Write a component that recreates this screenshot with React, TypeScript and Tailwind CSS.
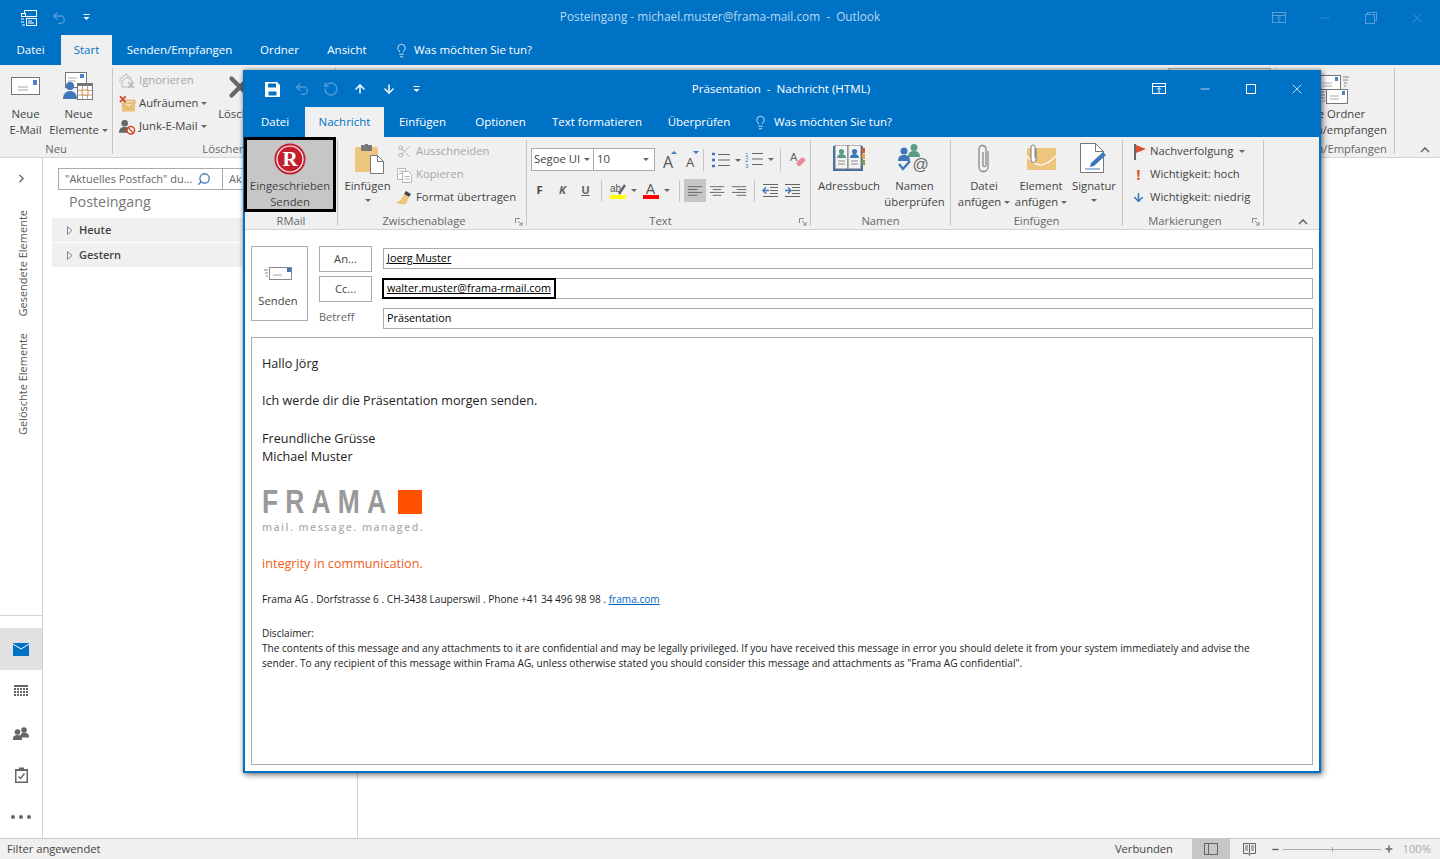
import type { ReactNode } from "react";
import { ArrowDown, ArrowUp, ChevronRight, Lightbulb, Minus, Plus, RotateCcw, Scissors, Search, Undo2, X } from "lucide-react";

const Caret = ({ className = "" }: { className?: string }) => (
  <span className={`inline-block w-0 h-0 border-x-[3px] border-x-transparent border-t-[3px] border-t-[#666] align-middle ${className}`} />
);

const QatMore = () => (
  <svg width="7" height="7" viewBox="0 0 7 7" fill="white"><rect x="0.5" y="0" width="6" height="1" /><path d="M0.5 3h6l-3 3z" /></svg>
);

const RestoreRibbon = ({ c = "white" }: { c?: string }) => (
  <svg width="14" height="12" viewBox="0 0 14 12" fill="none" stroke={c}><rect x="0.5" y="0.5" width="13" height="10" /><path d="M0.5 3.5h13M7 10V5M5 6.5l2-2 2 2" /></svg>
);

const Envelope = ({ w = 30, h = 20 }: { w?: number; h?: number }) => (
  <svg width={w} height={h} viewBox="0 0 30 20"><rect x="0.5" y="0.5" width="28" height="17" fill="white" stroke="#777" /><rect x="22" y="3" width="4" height="5" fill="#4a86c5" /><path d="M7 10h10M7 13h10" stroke="#aaa" /></svg>
);

const NewItems = () => (
  <svg width="31" height="30" viewBox="0 0 31 30"><rect x="2.5" y="0.5" width="21" height="15" fill="white" stroke="#777" /><rect x="17" y="2" width="4" height="4" fill="#4a86c5" /><path d="M5 6h9M5 9h7" stroke="#aaa" /><circle cx="7" cy="14" r="4" fill="#3f78b8" /><path d="M0 27c0-5 3-8 7-8s7 3 7 8z" fill="#3f78b8" /><rect x="14.5" y="11.5" width="15" height="16" fill="white" stroke="#777" /><rect x="14" y="11" width="16" height="3" fill="#777" /><path d="M19.5 14v13M24.5 14v13M15 18.5h14M15 23h14" stroke="#aaa" /><rect x="19" y="18" width="6" height="5" fill="white" stroke="#e58a2b" /></svg>
);

const IgnoreIcon = () => (
  <svg width="17" height="17" viewBox="0 0 17 17" fill="none" stroke="#b5b5b5"><path d="M1 7l6-5 6 5M1 7v3M3 9l5-4 5 4v6H3z" /><path d="M9 10l6 6M15 10l-6 6" strokeWidth="1.4" /></svg>
);

const CleanIcon = () => (
  <svg width="18" height="18" viewBox="0 0 18 18"><rect x="3" y="8" width="14" height="9" fill="#e9c27a" /><path d="M3 8l7 5 7-5M5 5h12v3H5z" fill="#f3dca9" stroke="#d9a95a" /><path d="M1 1l6 6M7 1L1 7" stroke="#d64a27" strokeWidth="2" /></svg>
);

const JunkIcon = () => (
  <svg width="18" height="18" viewBox="0 0 18 18"><circle cx="6" cy="5" r="3.5" fill="#666" /><path d="M0 15c0-4 2-6 6-6s6 2 6 6z" fill="#666" /><circle cx="12.5" cy="12.5" r="4" fill="white" stroke="#d64a27" strokeWidth="1.6" /><path d="M10 10l5 5" stroke="#d64a27" strokeWidth="1.6" /></svg>
);

const SendReceiveIcon = () => (
  <svg width="32" height="30" viewBox="0 0 32 30"><rect x="1.5" y="0.5" width="20" height="14" fill="white" stroke="#777" /><rect x="16" y="2" width="3" height="4" fill="#4a86c5" /><path d="M4 8h9M4 11h9" stroke="#aaa" /><path d="M24 2h6M24 5h5M25 8h3M25 11h2" stroke="#888" /><rect x="7.5" y="14.5" width="21" height="14" fill="white" stroke="#777" /><rect x="23" y="16" width="3" height="4" fill="#4a86c5" /><path d="M11 21h9M11 24h9" stroke="#aaa" /><path d="M0 17h6M1 20h5M2 23h4M3 26h3" stroke="#888" /></svg>
);

const RMailLogo = () => (
  <svg width="32" height="32" viewBox="0 0 32 32"><circle cx="16" cy="16" r="15.5" fill="#c2202e" /><circle cx="16" cy="16" r="13" fill="none" stroke="white" strokeWidth="1.2" /><text x="16" y="23" textAnchor="middle" fontFamily="Liberation Serif" fontWeight="700" fontSize="21" fill="white">R</text></svg>
);

const PasteIcon = () => (
  <svg className="ml-[4px]" width="29" height="30" viewBox="0 0 29 30"><rect x="0" y="3" width="23" height="25" rx="2" fill="#edc57d" /><rect x="6" y="1" width="11" height="6" rx="1" fill="#777" /><rect x="10" y="0" width="3" height="3" fill="#777" /><path d="M15.5 11.5h7l6 6v12h-13z" fill="white" stroke="#777" /><path d="M22.5 11.5v6h6" fill="none" stroke="#777" /></svg>
);

const CopyIcon = () => (
  <svg width="16" height="16" viewBox="0 0 16 16" fill="white" stroke="#b5b5b5"><path d="M0.5 1.5h8v11h-8z" /><path d="M5.5 4.5h6l3 3v8h-9z" /><path d="M2 4h4M2 6.5h3M7.5 9.5h5M7.5 12h5" /></svg>
);

const BrushIcon = () => (
  <svg width="17" height="15" viewBox="0 0 17 15"><path d="M10 1l5 3-2 3-5-3z" fill="#444" /><path d="M8 4l5 3-3 7c-3 1-8 0-10-2 3 0 6-3 8-8z" fill="#edc57d" /></svg>
);

const BigA = ({ up }: { up: boolean }) => (
  <span className="relative w-[22px] h-[22px] flex items-end justify-center">
    <span className={`${up ? "text-[16px]" : "text-[13px]"} leading-[18px] text-[#555]`}>A</span>
    <span className={`absolute right-[2px] top-[2px] w-0 h-0 border-x-[3px] border-x-transparent ${up ? "border-b-[3px] border-b-[#3f78b8]" : "border-t-[3px] border-t-[#3f78b8]"}`} />
  </span>
);

const Lines = ({ kind }: { kind: "left" | "center" | "right" | "out" | "in" }) => {
  const rows: Record<string, string> = {
    left: "M4 5.5h15M4 8.5h10M4 11.5h15M4 14.5h10",
    center: "M4 5.5h15M7 8.5h9M4 11.5h15M7 14.5h9",
    right: "M4 5.5h15M9 8.5h10M4 11.5h15M9 14.5h10",
    out: "M1 3.5h15M8 6.5h8M8 9.5h8M8 12.5h8M1 15.5h15",
    in: "M1 3.5h15M8 6.5h8M8 9.5h8M8 12.5h8M1 15.5h15",
  };
  return (
    <svg width={kind === "out" || kind === "in" ? 17 : 23} height="19" viewBox={kind === "out" || kind === "in" ? "0 0 17 19" : "0 0 23 19"} fill="none" stroke="#666">
      <path d={rows[kind]} />
      {kind === "out" && <path d="M7 9.5H1M4 6.5l-3 3 3 3" stroke="#3f78b8" strokeWidth="1.4" />}
      {kind === "in" && <path d="M1 9.5h6M4 6.5l3 3-3 3" stroke="#3f78b8" strokeWidth="1.4" />}
    </svg>
  );
};

const AddressBook = () => (
  <svg width="32" height="27" viewBox="0 0 32 27"><rect x="0" y="1" width="30" height="25" fill="#3f6fa8" /><rect x="2" y="0" width="13" height="24" fill="#f4f4f4" stroke="#777" /><rect x="15" y="0" width="13" height="24" fill="#f4f4f4" stroke="#777" /><rect x="29" y="3" width="3" height="5" fill="#d8562e" /><rect x="29" y="9" width="3" height="5" fill="#e9a23b" /><rect x="29" y="15" width="3" height="5" fill="#7a9f4d" /><circle cx="8.5" cy="6.5" r="2.6" fill="#5a9b87" /><path d="M4 13c0-3 2-4 4.500-4s4.500 1 4.500 4z" fill="#5a9b87" /><circle cx="21.500" cy="6.500" r="2.600" fill="#3f78b8" /><path d="M17 13c0-3 2-4 4.500-4s4.500 1 4.500 4z" fill="#3f78b8" /><path d="M5 16h7M5 19h7M18 16h7M18 19h7" stroke="#888" /></svg>
);

const CheckNames = () => (
  <svg width="33" height="29" viewBox="0 0 33 29"><circle cx="16" cy="3.500" r="3.500" fill="#5a9b87" /><path d="M10 13c0-4 2-6 6-6s6 2 6 6z" fill="#5a9b87" /><circle cx="6" cy="7" r="3.500" fill="#3f78b8" /><path d="M0 17c0-4 2-6 6-6s6 2 6 6z" fill="#3f78b8" /><path d="M1 20l4 5 7-8" fill="none" stroke="#3f78b8" strokeWidth="2.400" /><text x="22.500" y="26" textAnchor="middle" fontFamily="Liberation Sans" fontSize="16" fill="#666">@</text></svg>
);

const Clip = () => (
  <svg width="14" height="29" viewBox="0 0 14 29" fill="none" stroke="#8a8a8a" strokeWidth="1.300"><path d="M11 7v16a4.500 4.500 0 0 1-9 0V5a3.500 3.500 0 0 1 7 0v16a1.500 1.500 0 0 1-3 0V8" /></svg>
);

const ItemAttach = () => (
  <svg width="29" height="30" viewBox="0 0 29 30"><rect x="0" y="4" width="29" height="22" fill="#edc57d" /><path d="M0 12c6 7 9 9 14 9s9-3 15-9" fill="none" stroke="white" strokeWidth="1.200" /><path d="M9 5v11a2.500 2.500 0 0 1-5 0V3a2 2 0 0 1 4 0v11" fill="white" stroke="#777" /></svg>
);

const SignatureIcon = () => (
  <svg width="28" height="31" viewBox="0 0 28 31"><path d="M0.500 0.500h15l8 8v21H0.500z" fill="white" stroke="#777" /><path d="M15.500 0.500v8h8" fill="none" stroke="#777" /><path d="M5 26h15" stroke="#3f78b8" /><path d="M10 24l1-4 12-11 3 3-12 11z" fill="#3f78b8" /></svg>
);

const DialogMark = () => (
  <svg width="8" height="8" viewBox="0 0 8 8" fill="none" stroke="#888" className="absolute right-[3px] bottom-[3px]"><path d="M0.500 5V0.500H5M3 3l4 4M7 4v3H4" /></svg>
);

const TreeArrow = () => (
  <svg width="6" height="9" viewBox="0 0 6 9" fill="none" stroke="#888"><path d="M0.500 0.500l4.500 4-4.500 4z" /></svg>
);

const Sep = () => <div className="w-px bg-[#c6c6c6] my-[3px]" />;
const VSep = ({ h = 22 }: { h?: number }) => <div className="w-px bg-[#c6c6c6]" style={{ height: h }} />;

function Group({ label, width, dialog, children }: { label: string; width: number; dialog?: boolean; children: ReactNode }) {
  return (
    <div className="flex shrink-0" style={{ width }}>
      <div className="relative flex-1 flex flex-col min-w-0">
        <div className="h-[76px] flex">{children}</div>
        <div className={`h-[16px] leading-[15px] text-center text-[11.2px] text-[#666] whitespace-nowrap ${dialog ? "pr-[16px]" : ""}`}>{label}</div>
        {dialog && <DialogMark />}
      </div>
      <Sep />
    </div>
  );
}

function BigBtn({ icon, lines, width, caret, className = "" }: { icon: ReactNode; lines: ReactNode[]; width: number; caret?: boolean; className?: string }) {
  return (
    <div className={`flex flex-col items-center shrink-0 ${className}`} style={{ width }}>
      <div className="h-[40px] mb-px w-full flex items-center justify-center pt-[3px]">{icon}</div>
      {lines.map((l, i) => (
        <div key={i} className="h-[16px] leading-[16px] text-[#444] whitespace-nowrap">{l}</div>
      ))}
      {caret && <div className="h-[16px] leading-[12px]"><Caret /></div>}
    </div>
  );
}

function SmallBtn({ icon, children, off }: { icon: ReactNode; children: ReactNode; off?: boolean }) {
  return (
    <div className={`h-[23px] flex items-center gap-[3px] whitespace-nowrap ${off ? "text-[#a6a6a6]" : "text-[#444]"}`}>
      <span className="w-[17px] flex justify-center shrink-0">{icon}</span>
      {children}
    </div>
  );
}

function Tab({ width, active, children }: { width: number; active?: boolean; children: ReactNode }) {
  return (
    <div
      className={`h-full flex items-center justify-center shrink-0 whitespace-nowrap ${active ? "bg-[#f0f0f0] text-[#0072c6]" : "text-white"}`}
      style={{ width }}
    >
      {children}
    </div>
  );
}

function MainWindow() {
  return (
    <div className="h-full flex flex-col">
      {/* title bar */}
      <div className="h-[35px] bg-[#0072c6] relative flex items-center shrink-0">
        <div className="flex items-center pl-[21px] gap-[14px] w-[200px]">
          <svg width="16" height="16" viewBox="0 0 16 16" fill="none" stroke="white"><rect x="3.500" y="0.500" width="12" height="6" /><rect x="0.500" y="3.500" width="4" height="3" fill="#0072c6" /><rect x="5.500" y="8.500" width="10" height="7" fill="#0072c6" /><path d="M7 11h4M7 13h6M0 9h3M0 12h3M1 15h3" /></svg>
          <Undo2 size={16} color="#4f9bd6" strokeWidth={2} />
          <span className="ml-[2px] flex"><QatMore /></span>
        </div>
        <div className="absolute left-0 right-0 top-[7px] text-center text-[11.8px] leading-[18px] text-[#b9d8f0]">Posteingang - michael.muster@frama-mail.com&nbsp; - &nbsp;Outlook</div>
        <div className="ml-auto flex items-center text-[#5b9fd6]">
          <div className="w-[46px] flex justify-center"><RestoreRibbon c="#5b9fd6" /></div>
          <div className="w-[46px] flex justify-center"><Minus size={14} strokeWidth={1} /></div>
          <div className="w-[46px] flex justify-center"><svg width="12" height="12" viewBox="0 0 12 12" fill="none" stroke="#5b9fd6"><path d="M2.500 2.500v-2h9v8h-2" /><rect x="0.500" y="2.500" width="9" height="9" /></svg></div>
          <div className="w-[46px] flex justify-center"><X size={16} strokeWidth={1} /></div>
        </div>
      </div>
      {/* tabs */}
      <div className="h-[30px] bg-[#0072c6] flex items-stretch shrink-0 text-[11.5px]">
        <Tab width={61}>Datei</Tab>
        <Tab width={51} active>Start</Tab>
        <Tab width={135}>Senden/Empfangen</Tab>
        <Tab width={65}>Ordner</Tab>
        <Tab width={70}>Ansicht</Tab>
        <div className="ml-[12px] flex items-center gap-[5px] text-white">
          <Lightbulb size={15} strokeWidth={1.2} />
          Was möchten Sie tun?
        </div>
      </div>
      {/* ribbon */}
      <div className="h-[93px] bg-[#f0f0f0] border-b border-[#d4d4d4] flex shrink-0 text-[11.3px]">
        <Group label="Neu" width={113}>
          <BigBtn width={51} icon={<Envelope />} lines={["Neue", "E-Mail"]} />
          <BigBtn width={55} icon={<NewItems />} lines={["Neue", <span key="e">Elemente <Caret /></span>]} />
        </Group>
        <Group label="Löschen" width={223}>
          <div className="w-[99px] pl-[6px] pt-[4px]">
            <SmallBtn off icon={<IgnoreIcon />}>Ignorieren</SmallBtn>
            <SmallBtn icon={<CleanIcon />}>Aufräumen <Caret /></SmallBtn>
            <SmallBtn icon={<JunkIcon />}>Junk-E-Mail <Caret /></SmallBtn>
          </div>
          <BigBtn width={56} icon={<X size={34} color="#666" strokeWidth={3} />} lines={["Löschen"]} />
        </Group>
        <div className="flex-1" />
        <div className="flex shrink-0 w-[114px]">
          <div className="flex-1 px-[5px] pt-[3px]"><div className="h-[22px] border border-[#ababab]" /></div>
          <Sep />
        </div>
        <Group label="Senden/Empfangen" width={118}>
          <div className="w-full pr-[7px] flex justify-end">
            <div className="w-fit flex flex-col items-center">
              <div className="h-[40px] mb-px flex items-end"><SendReceiveIcon /></div>
              <div className="h-[16px] leading-[16px] text-[#444]">Alle Ordner</div>
              <div className="h-[16px] leading-[16px] text-[#444] whitespace-nowrap">Senden/empfangen</div>
            </div>
          </div>
        </Group>
        <div className="w-[45px] relative">
          <svg width="10" height="6" viewBox="0 0 10 6" fill="none" stroke="#666" strokeWidth="1.600" className="absolute right-[10px] bottom-[4px]"><path d="M1 5l4-4 4 4" /></svg>
        </div>
      </div>
      {/* body */}
      <div className="flex-1 flex min-h-0 bg-white">
        <div className="w-[43px] border-r border-[#d4d4d4] flex flex-col shrink-0 items-center text-[#666]">
          <ChevronRight size={13} strokeWidth={2.500} className="mt-[14px] mb-[17px]" />
          <div className="h-[122px] flex items-center justify-center pl-[5px]">
            <span className="[writing-mode:vertical-rl] rotate-180 text-[11px] whitespace-nowrap text-[#555]">Gesendete Elemente</span>
          </div>
          <div className="h-[121px] flex items-center justify-center pl-[5px]">
            <span className="[writing-mode:vertical-rl] rotate-180 text-[11px] whitespace-nowrap text-[#555]">Gelöschte Elemente</span>
          </div>
          <div className="flex-1" />
          <div className="w-full border-t border-[#d4d4d4] pt-[12px]">
            <div className="h-[42px] bg-[#e1e1e1] flex items-center justify-center">
              <svg width="16" height="13" viewBox="0 0 16 13"><rect width="16" height="13" fill="#0072c6" /><path d="M0 1l8 5 8-5" fill="none" stroke="white" /></svg>
            </div>
            <div className="h-[42px] flex items-center justify-center">
              <svg width="14" height="12" viewBox="0 0 14 12" fill="#666"><rect width="14" height="2" />{[3, 6, 9].map(y => [0, 3, 6, 9, 12].map(x => <rect key={`${x}-${y}`} x={x} y={y} width="2" height="2" />))}</svg>
            </div>
            <div className="h-[42px] flex items-center justify-center">
              <svg width="16" height="13" viewBox="0 0 16 13" fill="#666"><circle cx="11" cy="3" r="2.800" /><path d="M7 10c0-3 2-4.500 4-4.500s5 1 5 4v1H9z" /><circle cx="4.500" cy="5" r="2.800" /><path d="M0 13v-2c0-2 2-3 4.500-3S9 9 9 11v2z" /></svg>
            </div>
            <div className="h-[42px] flex items-center justify-center">
              <svg width="13" height="16" viewBox="0 0 13 16" fill="#666"><path d="M0 2h4V0.500h5V2h4v14H0zM1.500 4v10.500h10V4z" /><path d="M3.500 9.500l2 2 4-5" fill="none" stroke="#666" strokeWidth="1.400" /></svg>
            </div>
            <div className="h-[42px] flex items-center justify-center gap-[4px]">
              <span className="w-[4px] h-[4px] rounded-full bg-[#666]" />
              <span className="w-[4px] h-[4px] rounded-full bg-[#666]" />
              <span className="w-[4px] h-[4px] rounded-full bg-[#666]" />
            </div>
          </div>
        </div>
        <div className="w-[315px] border-r border-[#d4d4d4] shrink-0 pt-[10px] text-[11px]">
          <div className="flex h-[22px] ml-[15px] mr-[8px]">
            <div className="w-[165px] border border-[#ababab] flex items-center pl-[6px] text-[#666] whitespace-nowrap">
              "Aktuelles Postfach" du...
              <Search size={14} color="#3f78b8" className="ml-[5px] -scale-x-100" strokeWidth={2.200} />
            </div>
            <div className="flex-1 border border-l-0 border-[#ababab] flex items-center pl-[6px] text-[#666]">Ak</div>
          </div>
          <div className="pl-[26px] text-[14.300px] leading-[20px] text-[#777] mt-[2px] mb-[6px]">Posteingang</div>
          <div className="ml-[9px]">
            <div className="h-[24px] mb-px bg-[#f0f0f0] flex items-center pl-[15px] gap-[6px] font-semibold text-[#444]">
              <TreeArrow />
              Heute
            </div>
            <div className="h-[24px] bg-[#f0f0f0] flex items-center pl-[15px] gap-[6px] font-semibold text-[#444]">
              <TreeArrow />
              Gestern
            </div>
          </div>
        </div>
        <div className="flex-1" />
      </div>
      {/* status bar */}
      <div className="h-[21px] bg-[#f0f0f0] border-t border-[#c6c6c6] flex items-stretch text-[11.2px] text-[#444] shrink-0">
        <div className="pl-[7px] flex items-center">Filter angewendet</div>
        <div className="ml-auto flex items-center">Verbunden</div>
        <div className="ml-[19px] w-[38px] bg-[#c6c6c6] flex items-center justify-center">
          <svg width="14" height="12" viewBox="0 0 14 12" fill="none" stroke="#666"><rect x="0.500" y="0.500" width="13" height="11" /><path d="M4.500 0v12" /></svg>
        </div>
        <div className="w-[38px] flex items-center justify-center">
          <svg width="13" height="13" viewBox="0 0 13 13" fill="none" stroke="#666"><path d="M0.500 0.500h5.500l0.500 1 0.500-1h5.500v10h-5l-1 2-1-2h-5zM6.500 1.500v9M2 3h3M2 5h3M2 7h3M8 3h3M8 5h3M8 7h3" /></svg>
        </div>
        <div className="ml-[3px] flex items-center">
          <Minus size={9} strokeWidth={3.500} color="#666" />
          <div className="w-[98px] mx-[3px] h-px bg-[#aaa] relative"><span className="absolute left-1/2 -top-[2px] w-px h-[5px] bg-[#aaa]" /></div>
          <Plus size={10} strokeWidth={3.500} color="#666" />
        </div>
        <div className="w-[46px] flex items-center justify-end pr-[9px] text-[#aaa]">100%</div>
      </div>
    </div>
  );
}

function ComposeRibbon() {
  return (
    <div className="h-[93px] bg-[#f0f0f0] border-b border-[#d4d4d4] flex shrink-0 text-[11.3px]">
      <Group label="RMail" width={93}>
        <div className="h-[75px] w-[92px] -ml-px border-[3px] border-black bg-[#c6c6c6] flex flex-col items-center">
          <div className="h-[38px] shrink-0 flex items-center"><RMailLogo /></div>
          <div className="h-[16px] leading-[16px] text-[#444] whitespace-nowrap">Eingeschrieben</div>
          <div className="h-[16px] leading-[16px] text-[#444]">Senden</div>
        </div>
      </Group>
      <Group label="Zwischenablage" width={189} dialog>
        <BigBtn width={59} icon={<PasteIcon />} lines={["Einfügen"]} caret />
        <div className="pt-[3px] -ml-px">
          <SmallBtn off icon={<Scissors size={15} strokeWidth={1.300} />}>Ausschneiden</SmallBtn>
          <SmallBtn off icon={<CopyIcon />}>Kopieren</SmallBtn>
          <SmallBtn icon={<BrushIcon />}>Format übertragen</SmallBtn>
        </div>
      </Group>
      <Group label="Text" width={284} dialog>
        <div className="pl-[4px] pt-[11px] flex flex-col gap-[8px]">
          <div className="flex items-center h-[23px]">
            <div className="w-[63px] h-[23px] bg-white border border-[#ababab] flex items-center px-[2px] text-[#444]">Segoe UI<Caret className="ml-auto mr-[1px]" /></div>
            <div className="w-[61px] h-[23px] bg-white border border-l-0 border-[#ababab] flex items-center px-[3px] text-[#444]">10<Caret className="ml-auto mr-[2px]" /></div>
            <div className="ml-[2px]"><BigA up /></div>
            <div className="mr-[2px]"><BigA up={false} /></div>
            <VSep />
            <svg className="ml-[8px]" width="29" height="16" viewBox="0 0 29 16" fill="none"><path d="M6 2.500h12M6 8h12M6 13.500h12" stroke="#666" /><path d="M0 2h3M0 8h3M0 14h3" stroke="#3f78b8" strokeWidth="2.500" /><path d="M23 7l3 3 3-3" fill="#666" stroke="none" /></svg>
            <svg className="ml-[4px]" width="29" height="17" viewBox="0 0 29 17" fill="none"><path d="M7 2.500h11M7 8h11M7 13.500h11" stroke="#666" /><text x="0" y="6" fontSize="6" fontFamily="Liberation Sans" fill="#3f78b8" stroke="none">1</text><text x="0" y="11" fontSize="6" fontFamily="Liberation Sans" fill="#3f78b8" stroke="none">2</text><text x="0" y="17" fontSize="6" fontFamily="Liberation Sans" fill="#3f78b8" stroke="none">3</text><path d="M23 7l3 3 3-3" fill="#666" stroke="none" /></svg>
            <div className="ml-[6px]"><VSep /></div>
            <svg className="ml-[9px]" width="16" height="16" viewBox="0 0 16 16"><text x="0" y="9" fontSize="11" fontFamily="Liberation Sans" fill="#666">A</text><path d="M6 11l6-6 4 3-6 6H8z" fill="#ea8a96" /></svg>
          </div>
          <div className="flex items-center h-[23px]">
            <div className="w-[23px] text-center font-bold text-[#444] ml-[-3px]">F</div>
            <div className="w-[23px] text-center font-bold italic text-[#666]">K</div>
            <div className="w-[23px] text-center font-bold underline text-[#666]">U</div>
            <div className="ml-[4px] mr-[7px]"><VSep /></div>
            <div className="w-[17px] flex flex-col items-center">
              <svg width="16" height="12" viewBox="0 0 16 12"><text x="0" y="9" fontSize="10" fontFamily="Liberation Sans" fill="#555">ab</text><path d="M9 11l6-9" stroke="#666" strokeWidth="2.500" /></svg>
              <div className="w-[16px] h-[4px] bg-[#ffff00]" />
            </div>
            <Caret className="ml-[5px] mr-[5px]" />
            <div className="w-[17px] flex flex-col items-center">
              <span className="h-[13px] leading-[13px] text-[15px] text-[#555]">A</span>
              <div className="w-[16px] h-[4px] bg-[#ff0000]" />
            </div>
            <Caret className="ml-[5px] mr-[9px]" />
            <VSep />
            <div className="ml-[4px] w-[22px] h-[23px] bg-[#c6c6c6] flex items-center justify-center"><Lines kind="left" /></div>
            <div className="w-[22px] flex justify-center"><Lines kind="center" /></div>
            <div className="w-[22px] flex justify-center"><Lines kind="right" /></div>
            <div className="ml-[4px] mr-[7px]"><VSep /></div>
            <Lines kind="out" />
            <div className="ml-[5px]"><Lines kind="in" /></div>
          </div>
        </div>
      </Group>
      <Group label="Namen" width={140}>
        <BigBtn width={76} icon={<AddressBook />} lines={["Adressbuch"]} />
        <BigBtn width={55} icon={<CheckNames />} lines={["Namen", "überprüfen"]} />
      </Group>
      <Group label="Einfügen" width={172}>
        <BigBtn width={66} icon={<Clip />} lines={["Datei", <span key="a">anfügen <Caret /></span>]} />
        <BigBtn width={48} icon={<ItemAttach />} lines={["Element", <span key="a">anfügen <Caret /></span>]} />
        <BigBtn width={58} icon={<SignatureIcon />} lines={["Signatur"]} caret />
      </Group>
      <Group label="Markierungen" width={141} dialog>
        <div className="pl-[7px] pt-[3px]">
          <SmallBtn icon={<svg className="translate-x-[2px]" width="13" height="16" viewBox="0 0 13 16"><rect width="2" height="16" fill="#666" /><path d="M2 1l10 4-10 4z" fill="#d8512c" /></svg>}>Nachverfolgung <Caret className="ml-[3px]" /></SmallBtn>
          <SmallBtn icon={<span className="text-[#d8512c] font-bold text-[15px] leading-none">!</span>}>Wichtigkeit: hoch</SmallBtn>
          <SmallBtn icon={<ArrowDown size={13} color="#3f78b8" strokeWidth={3} />}>Wichtigkeit: niedrig</SmallBtn>
        </div>
      </Group>
      <div className="flex-1 relative">
        <svg width="10" height="6" viewBox="0 0 10 6" fill="none" stroke="#666" strokeWidth="1.600" className="absolute right-[11px] bottom-[4px]"><path d="M1 5l4-4 4 4" /></svg>
      </div>
    </div>
  );
}

function ComposeWindow() {
  return (
    <div className="absolute left-[243px] top-[70px] w-[1078px] h-[703px] border-2 border-[#0072c6] border-t-[1px] bg-white flex flex-col shadow-[2px_2px_6px_rgba(0,0,0,0.45),0_0_4px_rgba(0,0,0,0.3)]">
      {/* title bar */}
      <div className="h-[36px] bg-[#0072c6] relative flex items-center shrink-0">
        <div className="flex items-center pl-[20px]">
          <svg width="15" height="15" viewBox="0 0 15 15" fill="white"><path fillRule="evenodd" d="M0 0h12l3 3v12H0zM3 1.500v4h8v-4zM3.500 9.500v4h8v-4z" /></svg>
          <Undo2 size={16} color="#4f9bd6" strokeWidth={2} className="ml-[14px]" />
          <RotateCcw size={16} color="#4f9bd6" strokeWidth={2} className="ml-[13px]" />
          <ArrowUp size={14} color="white" strokeWidth={2.500} className="ml-[14px]" />
          <ArrowDown size={14} color="white" strokeWidth={2.500} className="ml-[15px]" />
          <span className="ml-[17px] flex"><QatMore /></span>
        </div>
        <div className="absolute left-0 right-[2px] top-[9px] text-center text-[11.6px] leading-[18px] text-white">Präsentation&nbsp; - &nbsp;Nachricht (HTML)</div>
        <div className="ml-auto -mr-px flex items-center text-white">
          <div className="w-[46px] flex justify-center"><RestoreRibbon /></div>
          <div className="w-[46px] flex justify-center"><Minus size={14} strokeWidth={1.200} /></div>
          <div className="w-[46px] flex justify-center"><div className="w-[10px] h-[10px] border border-white" /></div>
          <div className="w-[46px] flex justify-center"><X size={16} strokeWidth={1.100} /></div>
        </div>
      </div>
      {/* tabs */}
      <div className="h-[30px] bg-[#0072c6] flex items-stretch shrink-0 text-[11.5px]">
        <Tab width={60}>Datei</Tab>
        <Tab width={79} active>Nachricht</Tab>
        <Tab width={77}>Einfügen</Tab>
        <Tab width={79}>Optionen</Tab>
        <Tab width={114}>Text formatieren</Tab>
        <Tab width={90}>Überprüfen</Tab>
        <div className="ml-[9px] flex items-center gap-[6px] text-white">
          <Lightbulb size={15} strokeWidth={1.200} />
          Was möchten Sie tun?
        </div>
      </div>
      <ComposeRibbon />
      {/* header fields */}
      <div className="flex pl-[6px] pr-[6px] pt-[16px] text-[11.2px] text-[#444] shrink-0">
        <div className="w-[57px] h-[75px] border border-[#ababab] flex flex-col items-center pt-[20px] pr-[3px] shrink-0">
          <svg width="29" height="14" viewBox="0 0 29 14" fill="none"><rect x="5.500" y="0.500" width="22" height="12" fill="white" stroke="#888" /><rect x="23" y="1" width="4" height="4" fill="#3f78b8" /><path d="M9 8h9" stroke="#aaa" /><path d="M0 3h4M1 6h3M2 9h2" stroke="#888" /></svg>
          <span className="mt-[12px]">Senden</span>
        </div>
        <div className="w-[53px] ml-[11px] shrink-0">
          <div className="h-[26px] border border-[#ababab] flex items-center justify-center">An...</div>
          <div className="h-[26px] mt-[4px] border border-[#ababab] flex items-center justify-center">Cc...</div>
          <div className="mt-[6px] text-[#666] leading-[18px] text-[11px]">Betreff</div>
        </div>
        <div className="flex-1 ml-[11px] pt-[2px] text-[10.800px] text-black">
          <div className="h-[21px] border border-[#ababab] flex items-center pl-[3px]"><span className="underline">Joerg Muster</span></div>
          <div className="h-[21px] mt-[9px] border border-[#ababab] relative flex items-center pl-[3px]">
            <span className="underline">walter.muster@frama-rmail.com</span>
            <div className="absolute -left-[2px] -top-px -bottom-px w-[174px] border-2 border-black" />
          </div>
          <div className="h-[21px] mt-[9px] border border-[#ababab] flex items-center pl-[3px]">Präsentation</div>
        </div>
      </div>
      {/* message body */}
      <div className="flex-1 mx-[6px] mt-[8px] mb-[6px] border border-[#ababab] pl-[10px] pr-[40px] pt-[17px] text-[12.600px] leading-[18.500px] text-[#222]">
        <p>Hallo Jörg</p>
        <p className="mt-[18.500px]">Ich werde dir die Präsentation morgen senden.</p>
        <p className="mt-[19.500px]">Freundliche Grüsse</p>
        <p className="-mt-px">Michael Muster</p>
        <div className="mt-[24px] w-[161px] h-[44px] flex flex-col select-none">
          <div className="flex items-start h-[24px] shrink-0">
            <div className="w-[136px] h-[24px] shrink-0 flex">
              <span className="block origin-left scale-x-[0.8] font-['Liberation_Sans',sans-serif] text-[33px] leading-[24px] font-bold tracking-[9px] text-[#999] whitespace-nowrap">FRAMA</span>
            </div>
            <div className="w-[24px] h-[24px] bg-[#ff5000] shrink-0" />
          </div>
          <span className="mt-[6px] text-[10.500px] leading-[14px] font-semibold tracking-[1.500px] text-[#b0b0b0] whitespace-nowrap">mail. message. managed.</span>
        </div>
        <p className="mt-[21px] text-[#f25c19]">integrity in communication.</p>
        <p className="mt-[18px] text-[10.100px] leading-[15px]">
          Frama AG . Dorfstrasse 6 . CH-3438 Lauperswil . Phone +41 34 496 98 98 . <span className="underline text-[#0563c1]">frama.com</span>
        </p>
        <p className="mt-[19px] text-[10.100px] leading-[15px]">
          Disclaimer:<br />
          The contents of this message and any attachments to it are confidential and may be legally privileged. If you have received this message in error you should delete it from your system immediately and advise the<br />
          sender. To any recipient of this message within Frama AG, unless otherwise stated you should consider this message and attachments as "Frama AG confidential".
        </p>
      </div>
    </div>
  );
}

export default function App() {
  return (
    <div className="relative w-[1440px] h-[859px] overflow-hidden bg-white font-['Open_Sans','Noto_Sans',sans-serif]">
      <MainWindow />
      <ComposeWindow />
    </div>
  );
}
